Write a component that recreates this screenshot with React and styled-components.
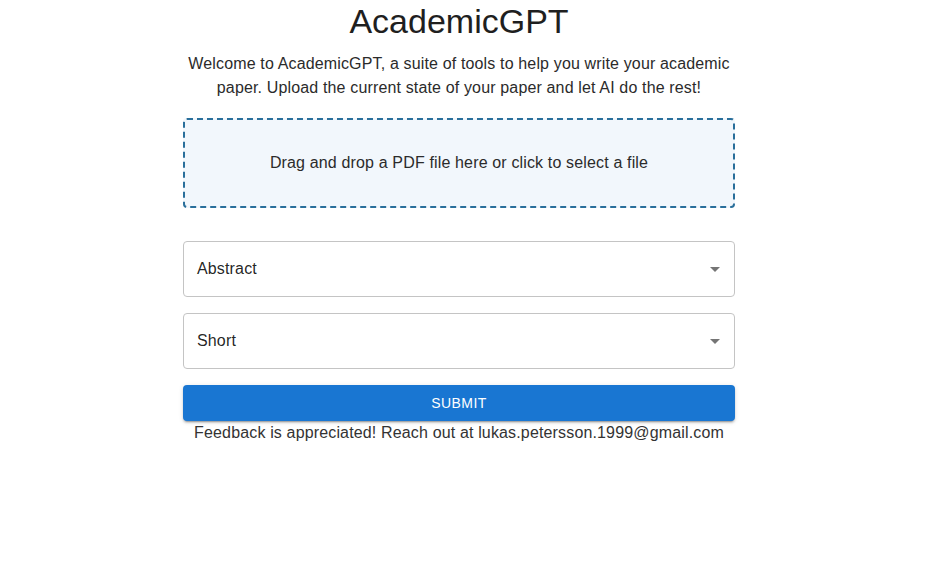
import React, { useState } from "react";
import styled, { createGlobalStyle } from "styled-components";

const GlobalStyle = createGlobalStyle`
  body {
    margin: 0;
    background: #ffffff;
    font-family: "Liberation Sans", Arial, sans-serif;
    color: rgba(0, 0, 0, 0.87);
  }
`;

const Page = styled.div`
  width: 918px;
  display: flex;
  flex-direction: column;
  align-items: center;
  padding-top: 1px;
`;

const Column = styled.div`
  width: 552px;
  display: flex;
  flex-direction: column;
  align-items: stretch;
`;

const Title = styled.h1`
  margin: 0;
  font-size: 34px;
  line-height: 40px;
  font-weight: 400;
  text-align: center;
  color: #1f1f1f;
`;

const Intro = styled.p`
  margin: 11px 0 0;
  font-size: 16px;
  line-height: 24px;
  letter-spacing: 0.15px;
  text-align: center;
  color: #2b2b2b;
`;

const DropZone = styled.div`
  margin-top: 18px;
  height: 90px;
  box-sizing: border-box;
  border: 2px dashed #2a6f9b;
  border-radius: 4px;
  background: #f2f7fc;
  display: flex;
  align-items: center;
  justify-content: center;
  font-size: 16px;
  letter-spacing: 0.15px;
  color: #2b2b2b;
  cursor: pointer;
`;

const Fields = styled.div`
  margin-top: 33px;
  display: flex;
  flex-direction: column;
  gap: 16px;
`;

const SelectBox = styled.div`
  height: 56px;
  box-sizing: border-box;
  border: 1px solid #c4c4c4;
  border-radius: 4px;
  padding: 0 7px 0 13px;
  display: flex;
  align-items: center;
  justify-content: space-between;
  font-size: 16px;
  letter-spacing: 0.15px;
  color: rgba(0, 0, 0, 0.87);
  cursor: pointer;
`;

const Arrow = styled.svg`
  width: 24px;
  height: 24px;
  fill: rgba(0, 0, 0, 0.54);
`;

const SubmitButton = styled.button`
  margin-top: 16px;
  height: 36px;
  border: none;
  border-radius: 4px;
  background: #1976d2;
  color: #ffffff;
  font-family: "Liberation Sans", Arial, sans-serif;
  font-size: 14px;
  font-weight: 500;
  letter-spacing: 0.4px;
  text-transform: uppercase;
  box-shadow: 0 3px 1px -2px rgba(0, 0, 0, 0.2), 0 2px 2px 0 rgba(0, 0, 0, 0.14),
    0 1px 5px 0 rgba(0, 0, 0, 0.12);
  cursor: pointer;
`;

const Feedback = styled.p`
  margin: 0;
  font-size: 16px;
  line-height: 24px;
  letter-spacing: 0.15px;
  text-align: center;
  color: #333333;
`;

const Select = ({ value }) => (
  <SelectBox>
    <span>{value}</span>
    <Arrow viewBox="0 0 24 24">
      <path d="M7 10l5 5 5-5z" />
    </Arrow>
  </SelectBox>
);

export default function App() {
  const [section] = useState("Abstract");
  const [length] = useState("Short");

  return (
    <>
      <GlobalStyle />
      <Page>
        <Column>
          <Title>AcademicGPT</Title>
          <Intro>
            Welcome to AcademicGPT, a suite of tools to help you write your academic
            paper. Upload the current state of your paper and let AI do the rest!
          </Intro>
          <DropZone>Drag and drop a PDF file here or click to select a file</DropZone>
          <Fields>
            <Select value={section} />
            <Select value={length} />
          </Fields>
          <SubmitButton>Submit</SubmitButton>
          <Feedback>
            Feedback is appreciated! Reach out at lukas.petersson.1999@gmail.com
          </Feedback>
        </Column>
      </Page>
    </>
  );
}
